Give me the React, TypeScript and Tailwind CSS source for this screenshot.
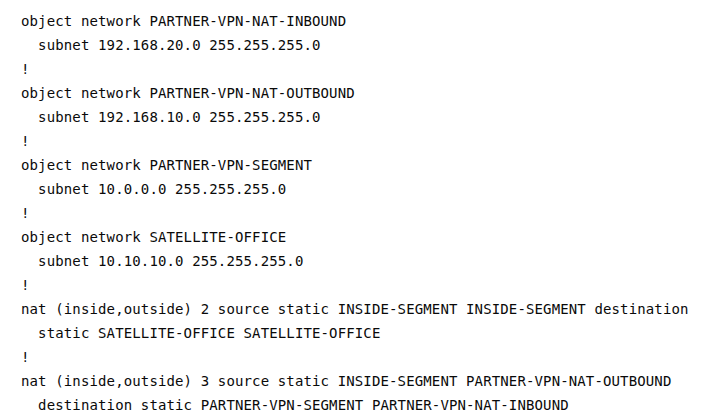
export default function App() {
  const lines = [
    "object network PARTNER-VPN-NAT-INBOUND",
    "  subnet 192.168.20.0 255.255.255.0",
    "!",
    "object network PARTNER-VPN-NAT-OUTBOUND",
    "  subnet 192.168.10.0 255.255.255.0",
    "!",
    "object network PARTNER-VPN-SEGMENT",
    "  subnet 10.0.0.0 255.255.255.0",
    "!",
    "object network SATELLITE-OFFICE",
    "  subnet 10.10.10.0 255.255.255.0",
    "!",
    "nat (inside,outside) 2 source static INSIDE-SEGMENT INSIDE-SEGMENT destination",
    "  static SATELLITE-OFFICE SATELLITE-OFFICE",
    "!",
    "nat (inside,outside) 3 source static INSIDE-SEGMENT PARTNER-VPN-NAT-OUTBOUND",
    "  destination static PARTNER-VPN-SEGMENT PARTNER-VPN-NAT-INBOUND",
  ];
  return (
    <div className="w-[712px] h-[420px] bg-white overflow-hidden pt-[9px] pl-[21px]">
      <pre className="m-0 font-['DejaVu_Sans_Mono',monospace] text-[14px] leading-[24px] tracking-[0.13px] text-[#0a0a0a] whitespace-pre">
        {lines.map((l, i) => (
          <div key={i}>{l}</div>
        ))}
      </pre>
    </div>
  );
}
